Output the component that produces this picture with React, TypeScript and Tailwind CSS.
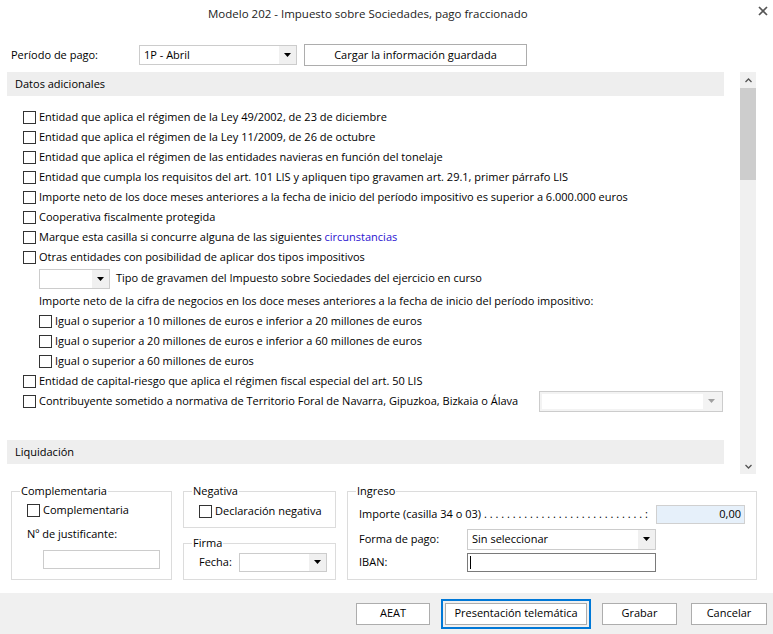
import React from 'react';

const font = "font-['Open_Sans','Noto_Sans',sans-serif]";

const Box: React.FC = () => (
  <span className="inline-block w-[13px] h-[13px] border border-[#333333] bg-white shrink-0" />
);

const Check: React.FC<{ children: React.ReactNode; className?: string }> = ({ children, className = '' }) => (
  <div className={`flex items-center h-[20px] gap-[3px] ${className}`}>
    <Box />
    <span className="whitespace-nowrap">{children}</span>
  </div>
);

const Arrow: React.FC<{ color?: string }> = ({ color = '#000' }) => (
  <svg width="7" height="4" viewBox="0 0 7 4">
    <path d="M0 0h7L3.5 4z" fill={color} />
  </svg>
);

interface ComboProps {
  className: string;
  value?: string;
  disabled?: boolean;
}

const Combo: React.FC<ComboProps> = ({ className, value, disabled }) => (
  <div
    className={`flex shrink-0 border ${disabled ? 'border-[#cccccc] bg-[#f3f3f3] p-[2px]' : 'border-[#cccccc] bg-white'} ${className}`}
  >
    <div className={`flex-1 flex items-center pl-[4px] ${disabled ? 'bg-white' : ''}`}>{value}</div>
    <div className={`w-[17px] flex items-center justify-center ${disabled ? '' : 'bg-[#f0f0f0]'}`}>
      <Arrow color={disabled ? '#a0a0a0' : '#000'} />
    </div>
  </div>
);

const Band: React.FC<{ children: React.ReactNode }> = ({ children }) => (
  <div className="h-[24px] bg-[#eeeeee] flex items-center pl-[8px]">{children}</div>
);

const Btn: React.FC<{ children: React.ReactNode; className: string }> = ({ children, className }) => (
  <button className={`h-[22px] bg-white border border-[#adadad] flex items-center justify-center ${className}`}>
    {children}
  </button>
);

const dots = Array(28).fill('.').join(' ');

export default function App() {
  return (
    <div className={`w-[773px] h-[634px] bg-white text-[11px] text-black flex flex-col overflow-hidden ${font}`}>
      {/* title */}
      <div className="h-[28px] flex items-center">
        <div className="pl-[208px] text-[11.5px] text-[#222]">Modelo 202 - Impuesto sobre Sociedades, pago fraccionado</div>
        <svg className="ml-auto mr-[5px] -mt-[6px]" width="10" height="10" viewBox="0 0 10 10">
          <path d="M1 1l8 8M9 1l-8 8" stroke="#555" strokeWidth="1.7" />
        </svg>
      </div>

      {/* periodo */}
      <div className="mt-[16px] h-[22px] flex items-center">
        <div className="pl-[11px] w-[139px]">Período de pago:</div>
        <Combo className="w-[158px] h-[20px]" value="1P - Abril" />
        <Btn className="ml-[7px] w-[223px]">Cargar la información guardada</Btn>
      </div>

      {/* scroll area */}
      <div className="mt-[6px] h-[402px] flex pl-[7px]">
        <div className="w-[717px] overflow-hidden">
          <Band>Datos adicionales</Band>
          <div className="pt-[11px] pl-[16px]">
            <Check>Entidad que aplica el régimen de la Ley 49/2002, de 23 de diciembre</Check>
            <Check>Entidad que aplica el régimen de la Ley 11/2009, de 26 de octubre</Check>
            <Check>Entidad que aplica el régimen de las entidades navieras en función del tonelaje</Check>
            <Check>Entidad que cumpla los requisitos del art. 101 LIS y apliquen tipo gravamen art. 29.1, primer párrafo LIS</Check>
            <Check>Importe neto de los doce meses anteriores a la fecha de inicio del período impositivo es superior a 6.000.000 euros</Check>
            <Check>Cooperativa fiscalmente protegida</Check>
            <Check>
              Marque esta casilla si concurre alguna de las siguientes{' '}
              <span className="text-[#2a12d0]">circunstancias</span>
            </Check>
            <Check>Otras entidades con posibilidad de aplicar dos tipos impositivos</Check>
            <div className="pl-[16px]">
              <div className="flex items-center h-[21px] mt-[1px]">
                <Combo className="w-[71px] h-[20px]" />
                <span className="ml-[6px]">Tipo de gravamen del Impuesto sobre Sociedades del ejercicio en curso</span>
              </div>
              <div className="h-[20px] mt-[2px] flex items-center whitespace-nowrap">
                Importe neto de la cifra de negocios en los doce meses anteriores a la fecha de inicio del período impositivo:
              </div>
              <Check>Igual o superior a 10 millones de euros e inferior a 20 millones de euros</Check>
              <Check>Igual o superior a 20 millones de euros e inferior a 60 millones de euros</Check>
              <Check>Igual o superior a 60 millones de euros</Check>
            </div>
            <Check>Entidad de capital-riesgo que aplica el régimen fiscal especial del art. 50 LIS</Check>
            <div className="flex items-center h-[20px]">
              <Check className="w-[516px] shrink-0">Contribuyente sometido a normativa de Territorio Foral de Navarra, Gipuzkoa, Bizkaia o Álava</Check>
              <Combo className="w-[184px] h-[21px]" disabled />
            </div>
          </div>
          <div className="mt-[29px]">
            <Band>Liquidación</Band>
          </div>
        </div>
        <div className="ml-[16px] w-[16px] bg-[#f0f0f0] flex flex-col">
          <div className="h-[16px] flex items-center justify-center">
            <svg width="7" height="5" viewBox="0 0 7 5">
              <path d="M0.5 4L3.5 1l3 3" stroke="#555" strokeWidth="1.3" fill="none" />
            </svg>
          </div>
          <div className="h-[92px] bg-[#cdcdcd]" />
          <div className="flex-1" />
          <div className="h-[16px] flex items-center justify-center">
            <svg width="7" height="5" viewBox="0 0 7 5">
              <path d="M0.5 1l3 3 3-3" stroke="#555" strokeWidth="1.3" fill="none" />
            </svg>
          </div>
        </div>
      </div>

      {/* groups */}
      <div className="mt-[9px] h-[97px] flex pl-[11px]">
        <fieldset className="w-[161px] min-w-0 h-[97px] border border-[#dcdcdc] px-[8px]">
          <legend className="px-[1px]">Complementaria</legend>
          <div className="pl-[7px] pt-[1px]">
            <Check>Complementaria</Check>
            <div className="mt-[4px] h-[20px] flex items-center">Nº de justificante:</div>
            <div className="ml-[16px] mt-[5px] w-[117px] h-[19px] border border-[#cccccc] bg-white" />
          </div>
        </fieldset>

        <div className="ml-[11px] w-[153px] flex flex-col">
          <fieldset className="h-[45px] min-w-0 border border-[#dcdcdc] px-[8px]">
            <legend className="px-[1px]">Negativa</legend>
            <div className="pl-[7px] pt-[2px]">
              <Check>Declaración negativa</Check>
            </div>
          </fieldset>
          <fieldset className="mt-[7px] h-[45px] min-w-0 border border-[#dcdcdc] px-[8px]">
            <legend className="px-[1px]">Firma</legend>
            <div className="pl-[7px] pt-[1px] flex items-center">
              <span className="w-[40px]">Fecha:</span>
              <Combo className="w-[88px] h-[19px]" />
            </div>
          </fieldset>
        </div>

        <fieldset className="ml-[11px] w-[410px] min-w-0 h-[97px] border border-[#dcdcdc] px-[8px]">
          <legend className="px-[1px]">Ingreso</legend>
          <div className="pl-[3px] pr-[3px]">
            <div className="flex items-center h-[20px] mt-[5px]">
              <span className="whitespace-nowrap">Importe (casilla 34 o 03)</span>
              <span className="flex-1 min-w-0 overflow-hidden whitespace-nowrap pl-[3px]">{dots}</span>
              <span className="ml-[1px] mr-[8px]">:</span>
              <div className="w-[89px] h-[19px] shrink-0 bg-[#e6f0fa] border border-[#d0d0d0] flex items-center justify-end pr-[3px]">
                0,00
              </div>
            </div>
            <div className="flex items-center h-[21px] mt-[4px]">
              <span className="w-[108px]">Forma de pago:</span>
              <Combo className="w-[189px] h-[21px]" value="Sin seleccionar" />
            </div>
            <div className="flex items-center h-[19px] mt-[3px]">
              <span className="w-[108px]">IBAN:</span>
              <div className="w-[189px] h-[19px] border border-[#7a7a7a] bg-white flex items-center pl-[2px]">
                <span className="w-[1px] h-[13px] bg-black" />
              </div>
            </div>
          </div>
        </fieldset>
      </div>

      {/* footer */}
      <div className="mt-[13px] h-[41px] bg-[#f0f0f0] flex items-center justify-end pr-[6px]">
        <Btn className="w-[74px]">AEAT</Btn>
        <div className="ml-[11px] border-2 border-[#0078d7] p-[2px]">
          <Btn className="w-[142px]">Presentación telemática</Btn>
        </div>
        <Btn className="ml-[11px] w-[75px]">Grabar</Btn>
        <Btn className="ml-[14px] w-[76px]">Cancelar</Btn>
      </div>
    </div>
  );
}
